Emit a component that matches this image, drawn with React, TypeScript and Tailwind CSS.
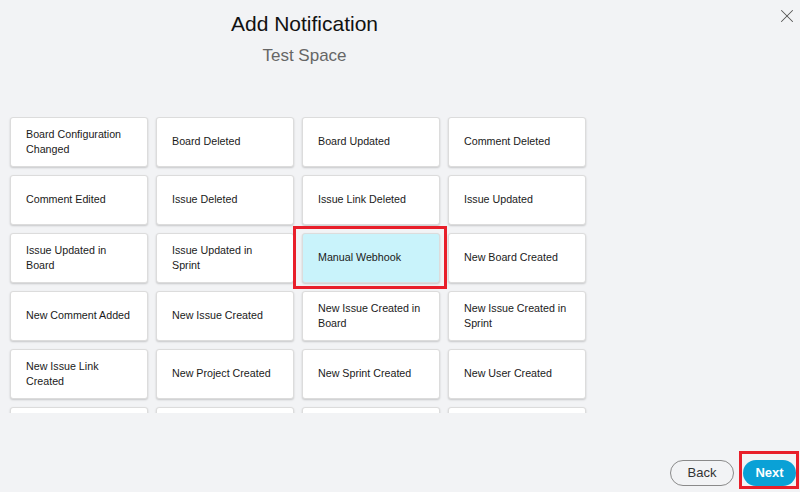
import { X } from 'lucide-react'

const events = [
  'Board Configuration Changed',
  'Board Deleted',
  'Board Updated',
  'Comment Deleted',
  'Comment Edited',
  'Issue Deleted',
  'Issue Link Deleted',
  'Issue Updated',
  'Issue Updated in Board',
  'Issue Updated in Sprint',
  'Manual Webhook',
  'New Board Created',
  'New Comment Added',
  'New Issue Created',
  'New Issue Created in Board',
  'New Issue Created in Sprint',
  'New Issue Link Created',
  'New Project Created',
  'New Sprint Created',
  'New User Created',
]

const selected = 'Manual Webhook'

export default function App() {
  return (
    <div
      className="relative w-[800px] h-[492px] overflow-hidden bg-[#f2f3f5] flex flex-col"
      style={{ fontFamily: '"Liberation Sans", Arial, sans-serif' }}
    >
      <button className="absolute right-[2px] top-[5px] text-[#555]">
        <X size={22} strokeWidth={1.1} />
      </button>

      <div className="w-[609px] text-center pt-[10px]">
        <h1 className="text-[21px] leading-[28px] text-[#111]">Add Notification</h1>
        <p className="text-[17px] leading-[22px] mt-[7px] text-[#666]">Test Space</p>
      </div>

      <div className="mt-[50px] h-[296px] overflow-hidden px-[10px]">
        <div className="grid grid-cols-[repeat(4,138px)] gap-x-[8px] gap-y-[8px]">
          {events.map(ev => (
            <div
              key={ev}
              className={
                'h-[50px] rounded-[3px] border border-[#dcdcdc] shadow-[0_1px_2px_rgba(0,0,0,0.18)] flex items-center pl-[15px] pr-[12px] pb-[1px] text-[10.7px] leading-[15px] text-[#1a1a1a] ' +
                (ev === selected ? 'bg-[#c9f3fb]' : 'bg-white')
              }
            >
              {ev}
            </div>
          ))}
          {[0, 1, 2, 3].map(i => (
            <div
              key={i}
              className="h-[50px] rounded-[3px] border border-[#dcdcdc] shadow-[0_1px_2px_rgba(0,0,0,0.18)] bg-white"
            />
          ))}
        </div>
      </div>

      <div className="flex-1" />

      <div className="flex justify-end items-center gap-[9px] pr-[4px] pb-[6px]">
        <button className="w-[64px] h-[26px] rounded-full border border-[#8a8a8a] text-[13px] text-[#333]">
          Back
        </button>
        <button className="w-[53px] h-[26px] rounded-full bg-[#0aa1d6] text-[13px] font-bold text-white">
          Next
        </button>
      </div>

      <div className="absolute left-[293px] top-[226px] w-[154px] h-[63px] border-[3px] border-[#e81f2a] pointer-events-none" />
      <div className="absolute left-[739px] top-[451px] w-[60px] h-[38px] border-[3px] border-[#e81f2a] pointer-events-none" />
    </div>
  )
}
